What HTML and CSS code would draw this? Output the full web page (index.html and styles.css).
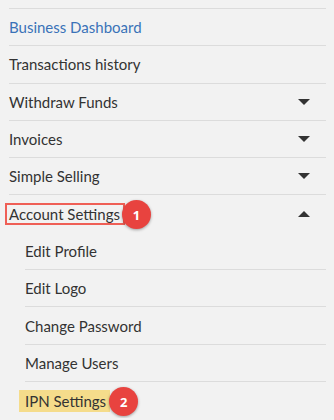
FILE: index.html
```html
<!DOCTYPE html>
<html>
<head>
<meta charset="utf-8">
<link rel="stylesheet" href="styles.css">
</head>
<body>
<nav class="menu">
  <div class="item active">Business Dashboard</div>
  <div class="item">Transactions history</div>
  <div class="item">Withdraw Funds<span class="caret down"></span></div>
  <div class="item">Invoices<span class="caret down"></span></div>
  <div class="item">Simple Selling<span class="caret down"></span></div>
  <div class="item">
    <span class="mark boxed">Account Settings<span class="badge">1</span></span>
    <span class="caret up"></span>
  </div>
  <div class="sub">
    <div class="subitem">Edit Profile</div>
    <div class="subitem">Edit Logo</div>
    <div class="subitem">Change Password</div>
    <div class="subitem">Manage Users</div>
    <div class="subitem"><span class="mark hl">IPN Settings<span class="badge">2</span></span></div>
  </div>
</nav>
</body>
</html>
```
FILE: styles.css
```css
html, body {
  margin: 0;
  background: #f2f2f2;
}
body {
  font-family: Lato, "Open Sans", sans-serif;
  font-size: 15px;
  color: #333333;
}
.menu {
  padding: 8px 8px 0 9px;
}
.item {
  display: flex;
  align-items: center;
  justify-content: space-between;
  box-sizing: border-box;
  height: 37.3px;
  border-top: 1px solid #dcdcdc;
  padding-right: 16px;
}
.active {
  color: #3a72b8;
}
.sub {
  padding-left: 16px;
}
.subitem {
  display: flex;
  align-items: center;
  box-sizing: border-box;
  height: 37.3px;
  border-top: 1px solid #dcdcdc;
}
.subitem:first-child {
  border-top: 1px solid transparent;
}
.caret {
  width: 0;
  height: 0;
  border-left: 6px solid transparent;
  border-right: 6px solid transparent;
}
.caret.down {
  border-top: 6px solid #333;
}
.caret.up {
  border-bottom: 6px solid #333;
}
.mark {
  position: relative;
  display: inline-block;
  line-height: 18px;
}
.boxed {
  border: 2px solid #ef5f56;
  padding: 0 3px 0 2px;
  margin-left: -4px;
  margin-top: 1px;
}
.hl {
  background: #f5dc8b;
  padding: 2px 4px 2px 6px;
  margin-left: -6px;
  margin-top: 2px;
}
.badge {
  position: absolute;
  top: 50%;
  width: 29px;
  height: 29px;
  margin-top: -14px;
  border-radius: 50%;
  background: #e8433f;
  color: #ffffff;
  font-family: "Open Sans", Lato, sans-serif;
  font-weight: 700;
  font-size: 13px;
  display: flex;
  align-items: center;
  justify-content: center;
  box-shadow: 0 1px 3px rgba(0, 0, 0, 0.35);
}
.boxed .badge {
  left: 100%;
  margin-left: -1px;
}
.hl .badge {
  left: 100%;
  margin-left: -1px;
}
```
